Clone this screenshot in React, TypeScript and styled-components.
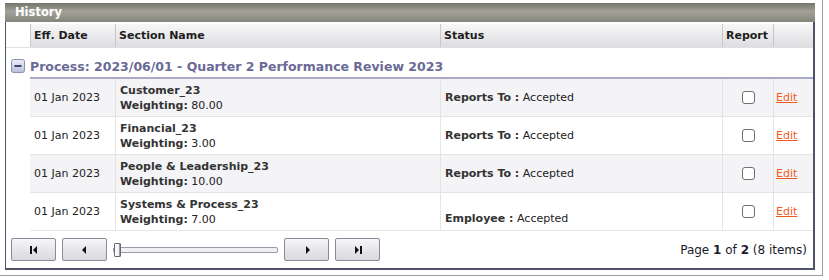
import React from 'react';
import styled, { createGlobalStyle } from 'styled-components';

const GlobalStyle = createGlobalStyle`
  body {
    margin: 0;
    background: #ffffff;
    font-family: 'DejaVu Sans', Verdana, sans-serif;
  }
`;

interface Row {
  date: string;
  section: string;
  weighting: string;
  role: string;
  alignBottom?: boolean;
}

const rows: Row[] = [
  { date: '01 Jan 2023', section: 'Customer_23', weighting: '80.00', role: 'Reports To' },
  { date: '01 Jan 2023', section: 'Financial_23', weighting: '3.00', role: 'Reports To' },
  { date: '01 Jan 2023', section: 'People & Leadership_23', weighting: '10.00', role: 'Reports To' },
  { date: '01 Jan 2023', section: 'Systems & Process_23', weighting: '7.00', role: 'Employee', alignBottom: true }
];

const cols = '24px 85px 325px 282px 51px 1fr';

export const App = () => {
  return (
    <Outer>
      <GlobalStyle />
      <Panel>
        <TitleBar>History</TitleBar>
        <HeaderRow>
          <HeadCell />
          <HeadCell $sep>Eff. Date</HeadCell>
          <HeadCell $sep>Section Name</HeadCell>
          <HeadCell $sep>Status</HeadCell>
          <HeadCell $sep>Report</HeadCell>
          <HeadCell $sep />
        </HeaderRow>

        <GroupRow>
          <Collapse>
            <svg width="14" height="14" viewBox="0 0 14 14">
              <defs>
                <linearGradient id="cg" x1="0" y1="0" x2="0" y2="1">
                  <stop offset="0" stopColor="#eef0f8" />
                  <stop offset="1" stopColor="#b8bed6" />
                </linearGradient>
              </defs>
              <rect x="0.5" y="0.5" width="13" height="13" rx="2" fill="url(#cg)" stroke="#8890b0" />
              <rect x="3.5" y="6" width="7" height="2" fill="#3a4470" />
            </svg>
          </Collapse>
          <GroupTitle>Process: 2023/06/01 - Quarter 2 Performance Review 2023</GroupTitle>
        </GroupRow>

        {rows.map((r, i) => (
          <DataRow key={i} $alt={i % 2 === 0}>
            <Indent />
            <Cell>{r.date}</Cell>
            <Cell $stack>
              <b>{r.section}</b>
              <span><b>Weighting:</b> {r.weighting}</span>
            </Cell>
            <Cell $bottom={r.alignBottom}>
              <span><b>{r.role} :</b> Accepted</span>
            </Cell>
            <Cell $center>
              <Check />
            </Cell>
            <Cell $tight>
              <EditLink href="#">Edit</EditLink>
            </Cell>
          </DataRow>
        ))}

        <Pager>
          <PagerButton>
            <svg width="10" height="10" viewBox="0 0 10 10">
              <rect x="1" y="1" width="2" height="8" fill="#111" />
              <polygon points="8,1 8,9 4,5" fill="#111" />
            </svg>
          </PagerButton>
          <PagerButton>
            <svg width="10" height="10" viewBox="0 0 10 10">
              <polygon points="6,1 6,9 2,5" fill="#111" />
            </svg>
          </PagerButton>
          <Slider>
            <Track />
            <Thumb />
          </Slider>
          <PagerButton>
            <svg width="10" height="10" viewBox="0 0 10 10">
              <polygon points="4,1 4,9 8,5" fill="#111" />
            </svg>
          </PagerButton>
          <PagerButton>
            <svg width="10" height="10" viewBox="0 0 10 10">
              <polygon points="2,1 2,9 6,5" fill="#111" />
              <rect x="7" y="1" width="2" height="8" fill="#111" />
            </svg>
          </PagerButton>
          <PageInfo>
            Page <b>1</b> of <b>2</b> (8 items)
          </PageInfo>
        </Pager>
      </Panel>
    </Outer>
  );
};

export default App;

const Outer = styled.div`
  width: 823px;
  height: 276px;
  padding: 3px 0 0 5px;
  box-sizing: border-box;
  border-right: 1px solid #9aa0a0;
  border-bottom: 1px solid #9aa0a0;
`;

const Panel = styled.div`
  width: 810px;
  height: 267px;
  box-sizing: border-box;
  border-left: 1px solid #50526a;
  border-right: 2px solid #50526a;
  border-bottom: 2px solid #50526a;
  display: flex;
  flex-direction: column;
  background: #ffffff;
`;

const TitleBar = styled.div`
  height: 19px;
  line-height: 19px;
  padding-left: 10px;
  margin-left: -1px;
  margin-right: -2px;
  background: linear-gradient(#74746a, #a2a298 45%, #84847a);
  color: #ffffff;
  font-weight: bold;
  font-size: 11.5px;
`;

const HeaderRow = styled.div`
  display: grid;
  grid-template-columns: ${cols};
  height: 23px;
  margin-top: 2px;
  border-bottom: 1px solid #e0e0e0;
`;

const HeadCell = styled.div<{ $sep?: boolean }>`
  display: flex;
  align-items: center;
  padding-left: 3px;
  font-weight: bold;
  font-size: 11px;
  color: #1e1e1e;
  background: ${(p) => (p.$sep ? 'linear-gradient(#f7f7f7, #dedee2)' : '#ffffff')};
  border-left: ${(p) => (p.$sep ? '1px solid #c8c8c8' : 'none')};
`;

const GroupRow = styled.div`
  display: flex;
  align-items: center;
  height: 31px;
  padding-top: 5px;
  box-sizing: border-box;
  position: relative;
  &::after {
    content: '';
    position: absolute;
    left: 24px;
    right: 0;
    bottom: 0;
    height: 2px;
    background: #a8a8c8;
  }
`;

const Collapse = styled.span`
  display: flex;
  width: 24px;
  justify-content: center;
`;

const GroupTitle = styled.span`
  font-weight: bold;
  font-size: 12.5px;
  color: #6a6a96;
`;

const DataRow = styled.div<{ $alt: boolean }>`
  display: grid;
  grid-template-columns: ${cols};
  height: 38px;
  background: ${(p) => (p.$alt ? '#f4f4f7' : '#ffffff')};
`;

const Indent = styled.div`
  background: #ffffff;
`;

const Cell = styled.div<{ $stack?: boolean; $bottom?: boolean; $center?: boolean; $tight?: boolean }>`
  display: flex;
  flex-direction: ${(p) => (p.$stack ? 'column' : 'row')};
  justify-content: ${(p) => (p.$stack ? 'center' : p.$center ? 'center' : 'flex-start')};
  align-items: ${(p) => (p.$stack ? 'flex-start' : p.$bottom ? 'flex-end' : 'center')};
  padding: ${(p) => (p.$bottom ? '0 4px 4px' : p.$tight ? '0 2px' : '0 4px')};
  font-size: 11px;
  line-height: 15px;
  color: #222;
  border-bottom: 1px solid #e4e4e4;
  & + & {
    border-left: 1px solid #e4e4e4;
  }
  b {
    color: #333;
  }
`;

const Check = styled.span`
  width: 11px;
  height: 11px;
  border: 1px solid #707070;
  border-radius: 3px;
  background: #ffffff;
`;

const EditLink = styled.a`
  color: #f05a1e;
  font-size: 11px;
`;

const Pager = styled.div`
  display: flex;
  align-items: center;
  gap: 6px;
  padding: 0 6px 0 5px;
  flex: 1;
`;

const PagerButton = styled.button`
  width: 45px;
  height: 23px;
  display: flex;
  align-items: center;
  justify-content: center;
  border: 1px solid #8a8a98;
  border-radius: 2px;
  background: linear-gradient(#f6f6f8, #d8d8de);
  padding: 0;
`;

const Slider = styled.div`
  width: 165px;
  height: 23px;
  position: relative;
  display: flex;
  align-items: center;
`;

const Track = styled.div`
  width: 100%;
  height: 4px;
  border: 1px solid #9a9aa8;
  border-radius: 2px;
  background: #f0f0f4;
`;

const Thumb = styled.div`
  position: absolute;
  left: 1px;
  top: 5px;
  width: 5px;
  height: 12px;
  border: 1px solid #6a6a78;
  border-radius: 1px;
  background: #f4f4f6;
  box-shadow: inset 1px 0 0 #ffffff, inset -1px 0 0 #9a9aa8;
`;

const PageInfo = styled.div`
  margin-left: auto;
  font-size: 12px;
  color: #1a1a2a;
`;
